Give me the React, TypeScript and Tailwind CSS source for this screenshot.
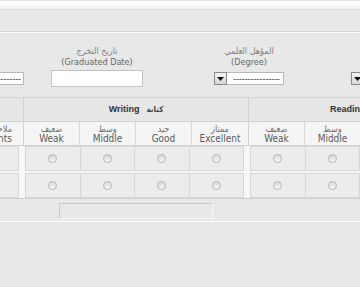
import React from 'react'

const font = "font-['DejaVu_Sans_Condensed','DejaVu_Sans',sans-serif]"

const levels = [
  { ar: 'ضعيف', en: 'Weak' },
  { ar: 'وسط', en: 'Middle' },
  { ar: 'جيد', en: 'Good' },
  { ar: 'ممتاز', en: 'Excellent' },
]

function Radio() {
  return (
    <span className="block w-[9px] h-[9px] rounded-full border border-[#b4b4b4] bg-gradient-to-b from-[#d8d8d8] to-[#f8f8f8]" />
  )
}

function DropButton() {
  return (
    <div className="w-[13px] h-[13px] shrink-0 border border-[#8a8a8a] bg-gradient-to-b from-[#f4f4f4] to-[#d6d6d6] flex items-center justify-center">
      <svg width="7" height="4" viewBox="0 0 7 4">
        <path d="M0 0h7L3.5 4z" fill="#111" />
      </svg>
    </div>
  )
}

function HeaderGroup({ en, ar }: { en: string; ar: string }) {
  return (
    <div className="w-[225px] shrink-0 flex flex-col border-r border-[#d2d2d2]">
      <div className="h-[24px] flex items-center justify-center gap-[7px] border-b border-[#d2d2d2] whitespace-nowrap">
        <span className="font-['Liberation_Sans',sans-serif] text-[9px] font-bold text-[#333]">{en}</span>
        <span className="text-[8px] font-bold text-[#444]">{ar}</span>
      </div>
      <div className="h-[24px] grid grid-cols-4 bg-[#f5f5f5] border-b border-[#d2d2d2]">
        {levels.map((l, i) => (
          <div key={l.en} className={`flex flex-col items-center justify-center leading-[10px] ${i < 3 ? 'border-r border-[#d8d8d8]' : ''}`}>
            <span className="text-[9px] text-[#707070]">{l.ar}</span>
            <span className="text-[10px] text-[#5a5a5a]">{l.en}</span>
          </div>
        ))}
      </div>
    </div>
  )
}

function DataGroup() {
  return (
    <div className="w-[225px] shrink-0 pl-px pr-[5px] flex">
      {levels.map(l => (
        <div key={l.en} className="flex-1 h-[25px] border border-[#d6d6d6] -ml-px first:ml-0 bg-[#ececec] flex items-center justify-center">
          <Radio />
        </div>
      ))}
    </div>
  )
}

function DataRow() {
  return (
    <div className="flex bg-[#f7f7f7]">
      <div className="w-[24px] shrink-0 pr-[5px]">
        <div className="h-[25px] border border-l-0 border-[#d6d6d6] bg-[#ececec]" />
      </div>
      <DataGroup />
      <DataGroup />
    </div>
  )
}

export default function App() {
  return (
    <div className={`w-[360px] h-[287px] overflow-hidden bg-[#e8e8e8] ${font}`}>
      {/* top bars */}
      <div className="h-px bg-[#e2e2e2]" />
      <div className="h-[9px] bg-gradient-to-b from-white to-[#f2f2f2] border-b border-[#d9d9d9]" />
      <div className="h-[22px] border-b border-[#d4d4d4]" />
      <div className="h-px bg-white" />

      {/* form fields */}
      <div className="h-[64px] flex items-start pt-[13px] whitespace-nowrap">
        <div className="w-[24px] shrink-0 mt-[26px] h-[13px] bg-white border border-l-0 border-[#b8b8b8] flex justify-end items-end overflow-hidden pr-[2px]">
          <span className="text-[9px] leading-[9px] text-[#333]">------------</span>
        </div>

        <div className="ml-[27px] w-[92px] shrink-0 flex flex-col items-center">
          <span className="text-[9px] leading-[11px] text-[#808080]">تاريخ التخرج</span>
          <span className="text-[9px] leading-[11px] text-[#666]">(Graduated Date)</span>
          <div className="mt-[2px] w-[92px] h-[17px] bg-white border border-[#c2c2c2]" />
        </div>

        <div className="ml-[71px] w-[70px] shrink-0 flex flex-col items-center">
          <span className="text-[9px] leading-[11px] text-[#808080]">المؤهل العلمي</span>
          <span className="text-[9px] leading-[11px] text-[#666]">(Degree)</span>
          <div className="mt-[4px] w-[70px] flex">
            <DropButton />
            <div className="flex-1 h-[13px] bg-white border border-l-0 border-[#b8b8b8] flex items-end justify-end pr-[3px] overflow-hidden">
              <span className="text-[9px] leading-[9px] text-[#333]">----------------</span>
            </div>
          </div>
        </div>

        <div className="ml-[67px] shrink-0 mt-[26px]">
          <DropButton />
        </div>
      </div>

      {/* skills table */}
      <div className="border-t border-[#d0d0d0] whitespace-nowrap">
        <div className="flex bg-[#e6e6e6]">
          <div className="w-[24px] shrink-0 flex flex-col border-r border-[#d2d2d2]">
            <div className="h-[24px] border-b border-[#d2d2d2]" />
            <div className="h-[24px] bg-[#f5f5f5] border-b border-[#d2d2d2] flex flex-col items-end justify-center leading-[10px] overflow-hidden pr-[11px]">
              <span className="text-[9px] text-[#707070]">ملاحظات</span>
              <span className="text-[10px] text-[#5a5a5a]">Comments</span>
            </div>
          </div>
          <HeaderGroup en="Writing" ar="كتابة" />
          <HeaderGroup en="Reading" ar="قراءة" />
        </div>
        <div className="flex flex-col gap-[2px] bg-[#f7f7f7] border-b border-[#d0d0d0]">
          <DataRow />
          <DataRow />
        </div>
      </div>

      {/* bottom */}
      <div className="h-[23px] pt-[4px] pl-[59px] border-b border-white">
        <div className="w-[154px] h-[16px] border border-[#cacaca] border-b-[#f6f6f6] border-r-[#f6f6f6] bg-[#e8e8e8]" />
      </div>
    </div>
  )
}
